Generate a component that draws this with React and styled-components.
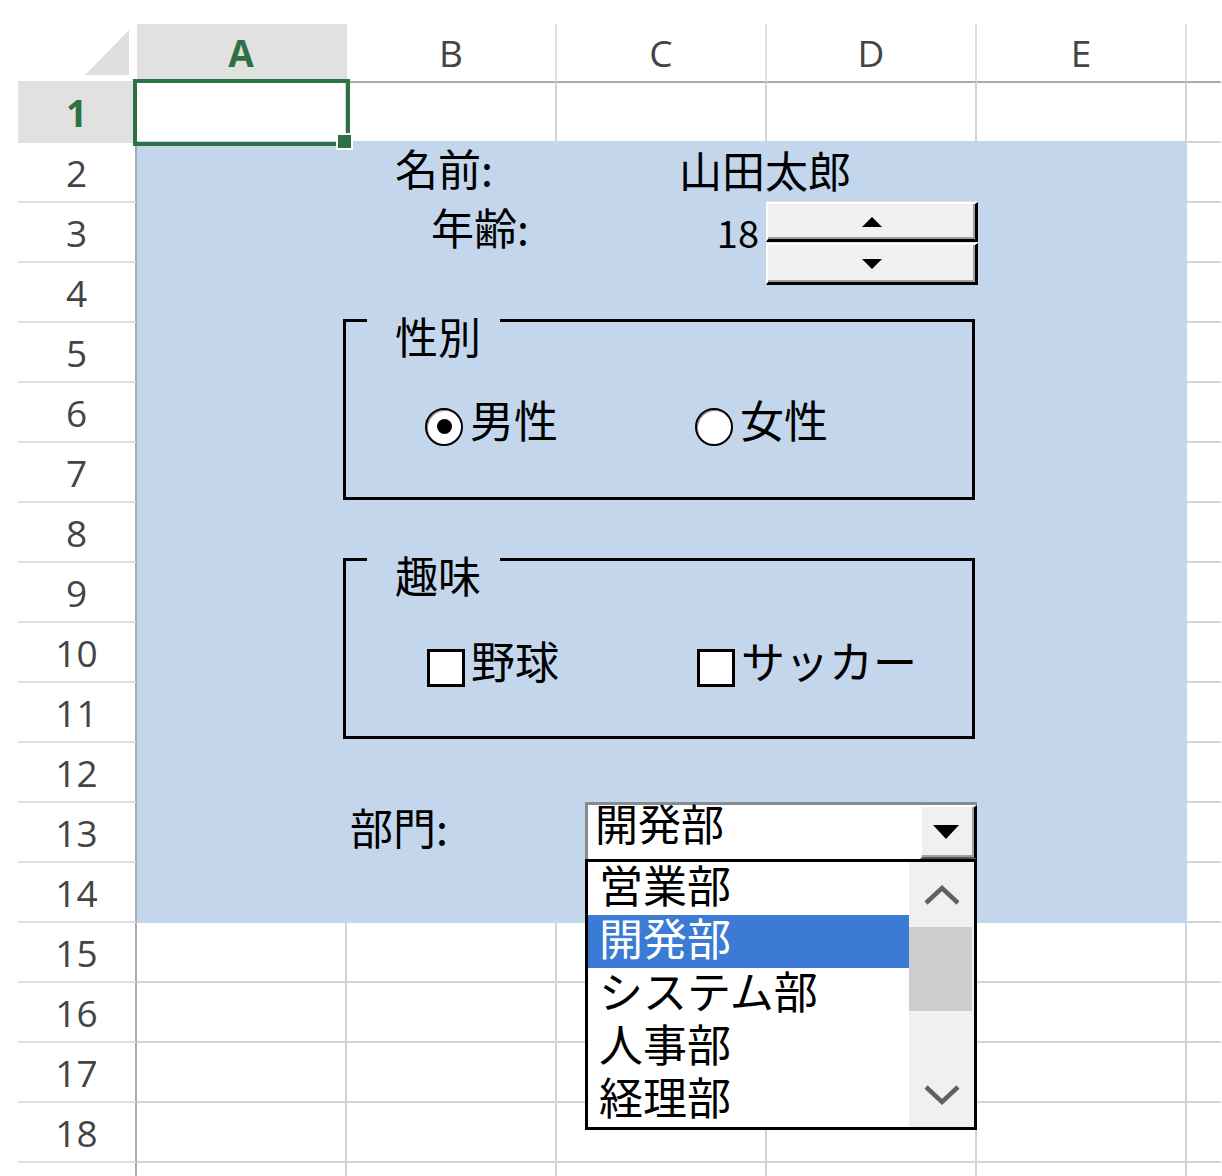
import React from 'react';
import styled, { createGlobalStyle } from 'styled-components';

const BLUE = '#c3d6ec';
const GRID = '#d4d4d4';
const HEAD_LINE = '#ababab';
const HEAD_SEP = '#dde1db';
const XL_GREEN = '#2e7145';
const CJK = `"Noto Sans CJK JP", "Noto Sans", sans-serif`;

const GlobalStyle = createGlobalStyle`
  html, body { margin: 0; padding: 0; background: #fff; }
  body { overflow: hidden; }
  * { box-sizing: border-box; }
`;

const Page = styled.div`
  position: relative;
  width: 1222px;
  height: 1176px;
  overflow: hidden;
  background: #fff;
`;

/* ---------- spreadsheet grid ---------- */
const Sheet = styled.div`
  display: grid;
  grid-template-columns: 119px repeat(5, 210px) 1fr;
  grid-template-rows: 59px;
  grid-auto-rows: 60px;
  padding: 24px 0 0 18px;
  font-family: "Open Sans", "Noto Sans", sans-serif;
`;

const Corner = styled.div`
  display: flex;
  justify-content: flex-end;
  align-items: flex-end;
  padding: 0 8px 6px 0;
  border-bottom: 2px solid ${HEAD_SEP};
`;

const CornerMark = styled.div`
  width: 44px;
  height: 45px;
  background: #dfdfdf;
  clip-path: polygon(100% 0, 100% 100%, 0 100%);
`;

const ColHead = styled.div`
  display: flex;
  align-items: center;
  justify-content: center;
  font-size: 37px;
  line-height: 1;
  color: ${(p) => (p.$active ? XL_GREEN : '#444')};
  font-weight: ${(p) => (p.$active ? 700 : 400)};
  background: ${(p) => (p.$active ? '#e1e1e1' : '#fff')};
  border-bottom: 2px solid ${HEAD_LINE};
  border-right: 2px solid ${(p) => (p.$last ? 'transparent' : HEAD_SEP)};
`;

const RowHead = styled.div`
  display: flex;
  align-items: center;
  justify-content: center;
  font-size: 37px;
  line-height: 1;
  color: ${(p) => (p.$active ? XL_GREEN : '#444')};
  font-weight: ${(p) => (p.$active ? 700 : 400)};
  background: ${(p) => (p.$active ? '#e1e1e1' : '#fff')};
  border-right: 2px solid ${HEAD_LINE};
  border-bottom: 2px solid ${HEAD_SEP};
`;

const Cell = styled.div`
  background: ${(p) => p.$fill};
  border-right: 2px solid ${(p) => p.$right};
  border-bottom: 2px solid ${(p) => p.$bottom};
`;

const Selection = styled.div`
  position: absolute;
  left: 133px;
  top: 79px;
  width: 217px;
  height: 67px;
  border: 4px solid ${XL_GREEN};
`;

const FillHandle = styled.div`
  position: absolute;
  right: -7px;
  bottom: -8px;
  width: 17px;
  height: 17px;
  background: ${XL_GREEN};
  border: 2px solid #fff;
`;

/* ---------- floating form controls ---------- */
const FormText = styled.div`
  position: absolute;
  left: ${(p) => p.$x}px;
  top: ${(p) => p.$y}px;
  font-family: ${CJK};
  font-size: 43px;
  line-height: 1;
  color: #000;
  white-space: nowrap;
`;

const NumberText = styled.div`
  position: absolute;
  left: 690px;
  top: 213px;
  width: 69px;
  text-align: right;
  font-family: ${CJK};
  font-size: 38px;
  line-height: 1;
  color: #000;
`;

const Spinner = styled.div`
  position: absolute;
  left: 766px;
  top: 202px;
  width: 212px;
  display: flex;
  flex-direction: column;
  gap: 1px;
`;

const SpinButton = styled.div`
  height: ${(p) => p.$h}px;
  background: #f0f0f0;
  border-top: 2px solid #fff;
  border-left: 2px solid #fff;
  border-right: 3px solid #000;
  border-bottom: 3px solid #000;
  box-shadow: inset -2px -2px 0 #a0a0a0, 0 -1px 0 #e3e3e3;
  display: flex;
  align-items: center;
  justify-content: center;
`;

const GroupBox = styled.div`
  position: absolute;
  left: 343px;
  top: ${(p) => p.$y}px;
  width: 632px;
  height: 181px;
  border: 3px solid #000;
`;

const Legend = styled.div`
  position: absolute;
  left: 21px;
  top: -8px;
  padding: 0 19px 0 28px;
  background: ${BLUE};
  font-family: ${CJK};
  font-size: 43px;
  line-height: 1;
  color: #000;
`;

const Options = styled.div`
  display: grid;
  grid-template-columns: 270px auto;
  align-items: center;
  padding: ${(p) => p.$top}px 0 0 ${(p) => p.$left}px;
`;

const Option = styled.div`
  display: flex;
  align-items: center;
`;

const OptionText = styled.span`
  margin: 0 0 15px ${(p) => p.$gap}px;
  font-family: ${CJK};
  font-size: 44px;
  line-height: 1;
  color: #000;
  white-space: nowrap;
`;

const Radio = styled.span`
  width: 38px;
  height: 38px;
  flex: none;
  border-radius: 50%;
  border: 2px solid #000;
  background: #fff;
  box-shadow: inset 1px 1px 0 #8c8c8c;
  display: flex;
  align-items: center;
  justify-content: center;
  &::after {
    content: '';
    display: ${(p) => (p.$checked ? 'block' : 'none')};
    width: 15px;
    height: 15px;
    border-radius: 50%;
    background: #000;
  }
`;

const Check = styled.span`
  width: 38px;
  height: 38px;
  flex: none;
  border: 3px solid #000;
  background: #fff;
`;

const Combo = styled.div`
  position: absolute;
  left: 585px;
  top: 802px;
  width: 392px;
  font-family: ${CJK};
`;

const ComboField = styled.div`
  height: 57px;
  display: flex;
  background: #fff;
  border-top: 3px solid #878c91;
  border-left: 3px solid #878c91;
`;

const ComboValue = styled.div`
  flex: 1;
  padding: 0 0 0 7px;
  margin-top: -4px;
  font-size: 43px;
  line-height: 1;
  color: #000;
`;

const DropButton = styled.div`
  width: 57px;
  background: #f0f0f0;
  border-top: 2px solid #fff;
  border-left: 2px solid #fff;
  border-right: 3px solid #000;
  border-bottom: 2px solid #555;
  box-shadow: inset -2px -2px 0 #a0a0a0;
  display: flex;
  align-items: center;
  justify-content: center;
  padding-right: 4px;
`;

const List = styled.div`
  display: grid;
  grid-template-columns: 321px 65px;
  height: 271px;
  border: 3px solid #000;
  background: #fff;
`;

const Items = styled.div`
  display: flex;
  flex-direction: column;
`;

const Item = styled.div`
  height: 53px;
  flex: none;
  display: flex;
  align-items: center;
  padding-left: 11px;
  background: ${(p) => (p.$selected ? '#3b7bd6' : 'transparent')};
  color: ${(p) => (p.$selected ? '#fff' : '#000')};
`;

const ItemText = styled.span`
  font-size: 44px;
  line-height: 1;
  margin-bottom: 10px;
  white-space: nowrap;
`;

const Scrollbar = styled.div`
  display: grid;
  grid-template-rows: 65px 1fr 65px;
  background: #f0f0f0;
`;

const ScrollArrow = styled.div`
  display: flex;
  align-items: center;
  justify-content: center;
`;

const Track = styled.div`
  display: flex;
  flex-direction: column;
`;

const Thumb = styled.div`
  height: 84px;
  margin-right: 2px;
  background: #cdcdcd;
`;

/* ---------- drawings ---------- */
const Triangle = ({ down, w = 20, h = 10 }) => (
  <svg width={w} height={h} viewBox={`0 0 ${w} ${h}`}>
    <polygon
      points={down ? `0,0 ${w},0 ${w / 2},${h}` : `${w / 2},0 ${w},${h} 0,${h}`}
      fill="#000"
    />
  </svg>
);

const Chevron = ({ down }) => (
  <svg width="36" height="22" viewBox="0 0 36 22">
    <polyline
      points={down ? '2,3 18,18 34,3' : '2,19 18,4 34,19'}
      fill="none"
      stroke="#606060"
      strokeWidth="4.5"
    />
  </svg>
);

const COLS = ['A', 'B', 'C', 'D', 'E'];

function cellProps(r, c) {
  const filled = r >= 2 && r <= 14 && c <= 4;
  const aboveFill = r === 1 && c <= 4;
  return {
    $fill: filled ? BLUE : '#fff',
    $right: c === 5 ? 'transparent' : filled ? BLUE : GRID,
    $bottom: filled || aboveFill ? BLUE : GRID,
  };
}

const departments = ['営業部', '開発部', 'システム部', '人事部', '経理部'];

export default function App() {
  return (
    <>
      <GlobalStyle />
      <Page>
        <Sheet>
          <Corner>
            <CornerMark />
          </Corner>
          {COLS.map((l, i) => (
            <ColHead key={l} $active={i === 0}>
              {l}
            </ColHead>
          ))}
          <ColHead $last />
          {Array.from({ length: 19 }, (_, i) => i + 1).map((r) => (
            <React.Fragment key={r}>
              <RowHead $active={r === 1}>{r <= 18 ? r : ''}</RowHead>
              {[0, 1, 2, 3, 4, 5].map((c) => (
                <Cell key={c} {...cellProps(r, c)} />
              ))}
            </React.Fragment>
          ))}
        </Sheet>

        <Selection>
          <FillHandle />
        </Selection>

        <FormText $x={395} $y={146}>名前:</FormText>
        <FormText $x={679} $y={148}>山田太郎</FormText>
        <FormText $x={431} $y={205}>年齢:</FormText>
        <NumberText>18</NumberText>

        <Spinner>
          <SpinButton $h={40}>
            <Triangle />
          </SpinButton>
          <SpinButton $h={42}>
            <Triangle down />
          </SpinButton>
        </Spinner>

        <GroupBox $y={319}>
          <Legend>性別</Legend>
          <Options $top={75} $left={79}>
            <Option>
              <Radio $checked />
              <OptionText $gap={7}>男性</OptionText>
            </Option>
            <Option>
              <Radio />
              <OptionText $gap={7}>女性</OptionText>
            </Option>
          </Options>
        </GroupBox>

        <GroupBox $y={558}>
          <Legend>趣味</Legend>
          <Options $top={77} $left={81}>
            <Option>
              <Check />
              <OptionText $gap={6}>野球</OptionText>
            </Option>
            <Option>
              <Check />
              <OptionText $gap={6}>サッカー</OptionText>
            </Option>
          </Options>
        </GroupBox>

        <FormText $x={350} $y={805}>部門:</FormText>

        <Combo>
          <ComboField>
            <ComboValue>開発部</ComboValue>
            <DropButton>
              <Triangle down w={26} h={14} />
            </DropButton>
          </ComboField>
          <List>
            <Items>
              {departments.map((d) => (
                <Item key={d} $selected={d === '開発部'}>
                  <ItemText>{d}</ItemText>
                </Item>
              ))}
            </Items>
            <Scrollbar>
              <ScrollArrow>
                <Chevron />
              </ScrollArrow>
              <Track>
                <Thumb />
              </Track>
              <ScrollArrow>
                <Chevron down />
              </ScrollArrow>
            </Scrollbar>
          </List>
        </Combo>
      </Page>
    </>
  );
}
